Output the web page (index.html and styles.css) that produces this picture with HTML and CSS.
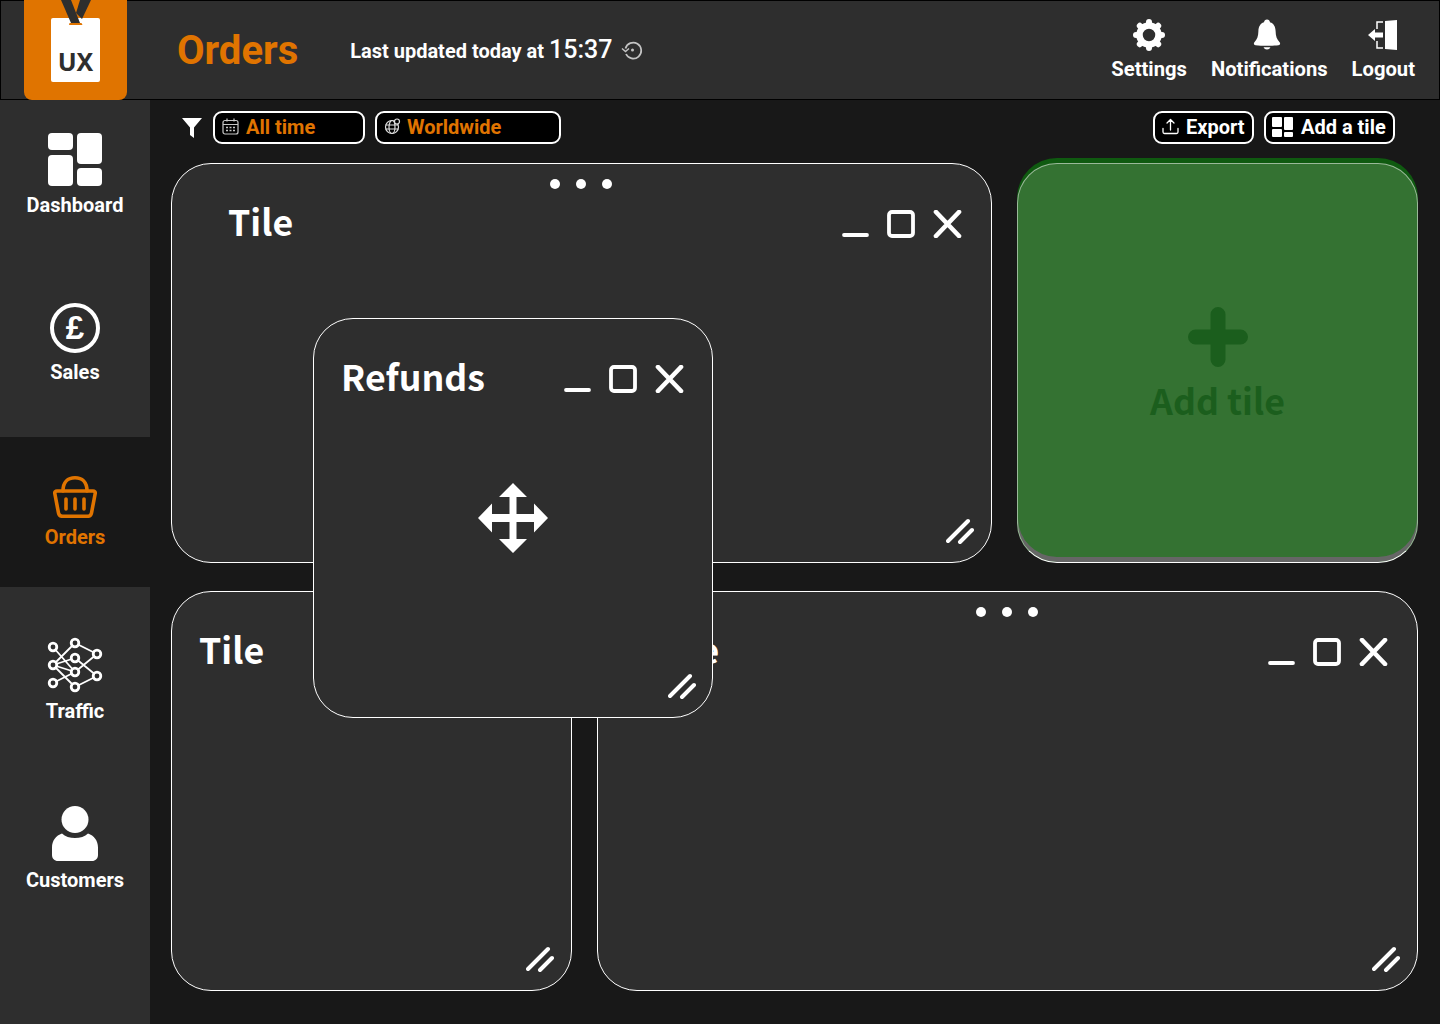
FILE: index.html
```html
<!DOCTYPE html>
<html lang="en">
<head>
  <meta charset="UTF-8" />
  <title>Orders</title>
  <link rel="stylesheet" href="styles.css">
</head>
<body>
  <header class="topbar">
    <div class="logo">
      <svg class="lanyard" width="103" height="30" viewBox="0 0 103 30">
        <path d="M37 0h10l9 23H47z" fill="#2e2e2e"/>
        <path d="M56 0h11l-9 19-6-6z" fill="#2e2e2e"/>
        <path d="M45.500 23h12l1 2h-13.500z" fill="#e07400"/>
      </svg>
      <div class="badge">UX</div>
    </div>
    <h1 class="page-title">Orders</h1>
    <p class="updated">Last updated today at <span class="updated-time">15:37</span></p>
    <svg class="history" width="22" height="22" viewBox="0 0 22 22" fill="none" stroke="#c4c4c4" stroke-width="1.700">
      <path d="M4.500 9.500A8 8 0 1 1 5 15"/>
      <path d="M1 9.500l3.500 3 3.500-3" stroke-width="1.500"/>
      <circle cx="11.500" cy="11" r="1.500" fill="#c4c4c4" stroke="none"/>
    </svg>
    <nav class="top-actions">
      <a class="top-action">
        <svg width="32" height="32" viewBox="0 0 32 32" fill="none" stroke="#fff">
          <circle cx="16" cy="16" r="9.500" stroke-width="6.500"/>
          <g stroke-width="6" stroke-linecap="round">
            <path d="M16 3v.5"/><path d="M16 28.500v.5"/><path d="M3 16h.5"/><path d="M28.500 16h.5"/>
            <path d="M6.800 6.800l.3.3"/><path d="M24.900 24.900l.3.3"/><path d="M25.200 6.800l-.3.3"/><path d="M7.100 24.900l-.3.3"/>
          </g>
        </svg>
        <span>Settings</span>
      </a>
      <a class="top-action">
        <svg width="32" height="32" viewBox="2 0 32 32" fill="#fff">
          <path d="M16 0.500c1.800 0 2.800 1.200 3 2.800 4 1.300 5.500 4.800 5.600 8.700.1 5 1.200 8.400 3.800 10.900 1.300 1.300.8 3.100-1 3.300-3 .4-7 .6-11.400.6s-8.400-.2-11.400-.6c-1.800-.2-2.300-2-1-3.300 2.600-2.500 3.700-5.900 3.800-10.900.1-3.900 1.600-7.400 5.600-8.700.2-1.600 1.200-2.800 3-2.800z"/>
          <path d="M12.500 28c1 .4 6 .4 7 0-.6 1.700-1.900 2.500-3.500 2.500s-2.900-.8-3.500-2.500z"/>
        </svg>
        <span>Notifications</span>
      </a>
      <a class="top-action">
        <svg width="32" height="32" viewBox="0 0 32 32">
          <path d="M18 1l12-1v30l-12-1z" fill="#fff" transform="translate(0 1)"/>
          <path d="M16 3h-6v7M16 29h-6v-7" fill="none" stroke="#fff" stroke-width="1.500"/>
          <path d="M1 16l7-6v3.500h8v5h-8V22z" fill="#fff"/>
        </svg>
        <span>Logout</span>
      </a>
    </nav>
  </header>

  <div class="content">
    <aside class="sidebar">
      <a class="side-item side-dashboard">
        <svg width="54" height="53" viewBox="0 0 54 53" fill="#fff">
          <rect width="25" height="17" rx="4"/>
          <rect x="29" width="25" height="31" rx="4"/>
          <rect y="22" width="25" height="31" rx="4"/>
          <rect x="29" y="35" width="25" height="18" rx="4"/>
        </svg>
        <span>Dashboard</span>
      </a>
      <a class="side-item side-sales">
        <div class="pound">£</div>
        <span>Sales</span>
      </a>
      <a class="side-item side-orders active">
        <svg width="44" height="42" viewBox="0 0 44 42" fill="none" stroke="#e07400" stroke-width="3.600" stroke-linecap="round" stroke-linejoin="round">
          <path d="M10 15C10 6 15 1.800 22 1.800S34 6 34 15"/>
          <path d="M4 15h36c1.500 0 2.500 1 2.200 2.500L38.500 37c-.4 2.200-1.700 3.300-4 3.300h-25c-2.300 0-3.600-1.100-4-3.300L1.800 17.500C1.500 16 2.500 15 4 15z"/>
          <path d="M13 23v10M22 23v10M31 23v10"/>
        </svg>
        <span>Orders</span>
      </a>
      <a class="side-item side-traffic">
        <svg width="56" height="56" viewBox="0 0 56 56" fill="#2e2e2e" stroke="#fff">
          <g stroke-width="1.800" fill="none">
            <path d="M6 10L28 35M6 28L28 6M6 28L28 21M6 28L28 35M6 28L28 50M6 46L28 35"/>
            <path d="M28 6L50 17M28 21L50 39M28 35L50 17M28 50L50 39"/>
          </g>
          <g stroke-width="2.800">
            <circle cx="6" cy="10" r="3.800"/><circle cx="6" cy="28" r="3.800"/><circle cx="6" cy="46" r="3.800"/>
            <circle cx="28" cy="6" r="3.800"/><circle cx="28" cy="21" r="3.800"/><circle cx="28" cy="35" r="3.800"/><circle cx="28" cy="50" r="3.800"/>
            <circle cx="50" cy="17" r="3.800"/><circle cx="50" cy="39" r="3.800"/>
          </g>
        </svg>
        <span>Traffic</span>
      </a>
      <a class="side-item side-customers">
        <svg width="46" height="55" viewBox="0 0 46 55" fill="#fff">
          <circle cx="23" cy="13.500" r="13.500"/>
          <path d="M10 27.500c3 3 8 4.500 13 4.500s10-1.500 13-4.500c6 2 10 7 10 14V49c0 3.500-2.500 6-6 6H6c-3.500 0-6-2.500-6-6v-7.500c0-7 4-12 10-14z"/>
        </svg>
        <span>Customers</span>
      </a>
    </aside>

    <main class="main">
      <div class="toolbar">
        <svg class="funnel" width="20" height="20" viewBox="0 0 20 20" fill="#fff">
          <path d="M0 0h20l-8 9.500V20l-4-3V9.500z"/>
        </svg>
        <button class="pill pill-time">
          <svg width="17" height="17" viewBox="0 0 17 17" fill="none" stroke="#c8c8c8" stroke-width="1.200">
            <rect x="1" y="2.500" width="15" height="13.500" rx="2"/>
            <path d="M1 6.500h15M5 .5v3M12 .5v3"/>
            <path d="M4 9.500h2M7.500 9.500h2M11 9.500h2M4 12.500h2M7.500 12.500h2M11 12.500h2" stroke-width="1.600"/>
          </svg>
          <span class="pill-orange">All time</span>
        </button>
        <button class="pill pill-place">
          <svg width="17" height="17" viewBox="0 0 17 17" fill="none" stroke="#e0e0e0" stroke-width="1.200">
            <circle cx="8" cy="9" r="6.500"/>
            <ellipse cx="8" cy="9" rx="3" ry="6.500"/>
            <path d="M1.500 7h13M1.500 11h13"/>
            <circle cx="13" cy="3.500" r="2.500" fill="#000"/>
          </svg>
          <span class="pill-orange">Worldwide</span>
        </button>
        <div class="toolbar-right">
          <button class="pill pill-export">
            <svg width="17" height="17" viewBox="0 0 17 17" fill="none" stroke="#fff" stroke-width="1.300" stroke-linecap="round" stroke-linejoin="round">
              <path d="M8.500 12V2M5 5l3.500-3.500L12 5"/>
              <path d="M1 10.500V14c0 1 .5 1.500 1.500 1.500h12c1 0 1.500-.5 1.500-1.500v-3.500"/>
            </svg>
            <span>Export</span>
          </button>
          <button class="pill pill-add">
            <svg width="21" height="20" viewBox="0 0 21 20" fill="#fff">
              <rect width="10" height="10" rx="1"/>
              <rect x="12" width="9" height="13" rx="1"/>
              <rect y="12" width="10" height="8" rx="1"/>
              <rect x="12" y="15" width="9" height="5" rx="1"/>
            </svg>
            <span>Add a tile</span>
          </button>
        </div>
      </div>

      <div class="tiles">
        <div class="tile-row">
          <section class="tile tile-wide">
            <div class="dots"><i></i><i></i><i></i></div>
            <h2 class="tile-title title-moved">Tile</h2>
            <svg class="win-controls" width="120" height="28" viewBox="0 0 120 28" fill="none" stroke="#fff" stroke-width="3.800" stroke-linecap="round" stroke-linejoin="round">
              <path d="M2 25h23"/>
              <rect x="47" y="2" width="24" height="24" rx="3"/>
              <path d="M94 2l23 24M117 2L94 26" stroke-width="4.600"/>
            </svg>
            <svg class="resize" width="28" height="28" viewBox="0 0 28 28" stroke="#fff" stroke-width="4" stroke-linecap="round">
              <path d="M2 24L22 4M14 25L26 13"/>
            </svg>
          </section>
          <section class="tile tile-add">
            <svg width="60" height="60" viewBox="0 0 60 60" stroke="#1b5e1d" stroke-width="15" stroke-linecap="round">
              <path d="M30 7.500v45M7.500 30h45"/>
            </svg>
            <div class="add-label">Add tile</div>
          </section>
        </div>
        <div class="tile-row">
          <section class="tile">
            <h2 class="tile-title">Tile</h2>
            <svg class="resize" width="28" height="28" viewBox="0 0 28 28" stroke="#fff" stroke-width="4" stroke-linecap="round">
              <path d="M2 24L22 4M14 25L26 13"/>
            </svg>
          </section>
          <section class="tile tile-wide">
            <div class="dots"><i></i><i></i><i></i></div>
            <h2 class="tile-title title-moved">Tile</h2>
            <svg class="win-controls" width="120" height="28" viewBox="0 0 120 28" fill="none" stroke="#fff" stroke-width="3.800" stroke-linecap="round" stroke-linejoin="round">
              <path d="M2 25h23"/>
              <rect x="47" y="2" width="24" height="24" rx="3"/>
              <path d="M94 2l23 24M117 2L94 26" stroke-width="4.600"/>
            </svg>
            <svg class="resize" width="28" height="28" viewBox="0 0 28 28" stroke="#fff" stroke-width="4" stroke-linecap="round">
              <path d="M2 24L22 4M14 25L26 13"/>
            </svg>
          </section>
        </div>
      </div>

      <section class="tile tile-floating">
        <h2 class="tile-title">Refunds</h2>
        <svg class="win-controls" width="120" height="28" viewBox="0 0 120 28" fill="none" stroke="#fff" stroke-width="3.800" stroke-linecap="round" stroke-linejoin="round">
          <path d="M2 25h23"/>
          <rect x="47" y="2" width="24" height="24" rx="3"/>
          <path d="M94 2l23 24M117 2L94 26" stroke-width="4.600"/>
        </svg>
        <svg class="move" width="70" height="70" viewBox="0 0 70 70" fill="#fff">
          <path d="M35 0l14 14h-10.500v17H56V20.500L70 35 56 49.500V39H38.500v17H49L35 70 21 56h10.500V39H14v10.500L0 35l14-14.500V31h17.500V14H21z"/>
        </svg>
        <svg class="resize" width="28" height="28" viewBox="0 0 28 28" stroke="#fff" stroke-width="4" stroke-linecap="round">
          <path d="M2 24L22 4M14 25L26 13"/>
        </svg>
      </section>
    </main>
  </div>
</body>
</html>
```

FILE: styles.css
```css
* {
  box-sizing: border-box;
}
html, body {
  margin: 0;
  height: 1024px;
  overflow: hidden;
}
body {
  font-family: Roboto, Arial, sans-serif;
  font-weight: 700;
  background: #181818;
  color: #fff;
}

/* top bar */
.topbar {
  display: flex;
  align-items: center;
  height: 100px;
  background: #2e2e2e;
  border: 1px solid #000;
  padding-left: 23px;
  padding-right: 24px;
  position: relative;
  z-index: 2;
}
.logo {
  position: relative;
  flex: none;
  width: 103px;
  height: 100px;
  margin-top: -1px;
  margin-bottom: -1px;
  align-self: flex-start;
  background: #e07400;
  border-radius: 0 0 8px 8px;
  display: flex;
  justify-content: center;
  padding-top: 18px;
}
.lanyard {
  position: absolute;
  left: 0;
  top: 0;
}
.badge {
  width: 49px;
  height: 64px;
  background: #fff;
  border-radius: 2px;
  color: #2e2e2e;
  font-family: "Noto Sans", sans-serif;
  font-size: 25px;
  line-height: 28px;
  text-align: center;
  padding-top: 29px;
}
.page-title {
  margin: 0 0 0 50px;
  color: #e07400;
  font-size: 40px;
  font-weight: 700;
}
.updated {
  margin: 0 0 2px 52px;
  font-size: 20px;
  font-weight: 700;
  white-space: nowrap;
}
.updated-time {
  font-size: 25px;
  font-weight: 500;
}
.history {
  margin-left: 9px;
  margin-bottom: 1px;
}
.top-actions {
  margin-left: auto;
  display: flex;
  gap: 24px;
}
.top-action {
  display: flex;
  flex-direction: column;
  align-items: center;
  font-size: 20.2px;
  line-height: 24px;
  gap: 6px;
  margin-top: -1px;
}

/* sidebar */
.content {
  display: flex;
  height: 924px;
}
.sidebar {
  flex: none;
  width: 150px;
  background: #2e2e2e;
  display: flex;
  flex-direction: column;
}
.side-item {
  display: flex;
  flex-direction: column;
  align-items: center;
  font-size: 20px;
  line-height: 24px;
  gap: 7px;
}
.side-dashboard {
  height: 170px;
  padding-top: 33px;
}
.side-sales {
  height: 167px;
  padding-top: 33px;
}
.side-orders {
  height: 150px;
  padding-top: 39px;
}
.side-traffic {
  height: 187px;
  padding-top: 50px;
  gap: 6px;
}
.side-customers {
  padding-top: 32px;
}
.side-item.active {
  background: #181818;
  color: #e07400;
}
.pound {
  width: 50px;
  height: 50px;
  border: 4px solid #fff;
  border-radius: 50%;
  font-family: "Liberation Sans", sans-serif;
  font-size: 33px;
  line-height: 41px;
  text-align: center;
}

/* main area */
.main {
  flex: 1;
  position: relative;
  padding: 11px 22px 0 21px;
}
.toolbar {
  display: flex;
  align-items: center;
  gap: 10px;
  height: 33px;
  padding-left: 11px;
  padding-right: 23px;
}
.funnel {
  margin-right: 1px;
}
.toolbar-right {
  margin-left: auto;
  display: flex;
  gap: 10px;
}
.pill {
  display: flex;
  align-items: center;
  gap: 7px;
  height: 33px;
  background: #000;
  border: 2px solid #fff;
  border-radius: 9px;
  color: #fff;
  font-family: Roboto, Arial, sans-serif;
  font-weight: 700;
  font-size: 20px;
  padding: 0 0 2px 7px;
}
.pill-orange {
  color: #e07400;
}
.pill-time {
  width: 152px;
}
.pill-place {
  width: 186px;
  gap: 6px;
}
.pill-export {
  width: 101px;
}
.pill-add {
  width: 131px;
  padding-left: 6px;
  gap: 8px;
}

/* tiles */
.tiles {
  margin-top: 19px;
  display: flex;
  flex-direction: column;
  gap: 28px;
}
.tile-row {
  display: flex;
  gap: 25px;
}
.tile {
  position: relative;
  flex: none;
  width: 401px;
  height: 400px;
  background: #2e2e2e;
  border: 1px solid #fff;
  border-radius: 40px;
}
.tile-wide {
  width: 821px;
}
.tile-title {
  margin: 0;
  padding: 34px 0 0 27px;
  font-family: "Noto Sans CJK SC", "Noto Sans", sans-serif;
  font-size: 35.7px;
  line-height: 46px;
  font-weight: 700;
}
.title-moved {
  padding-left: 56px;
}
.dots {
  position: absolute;
  top: 15px;
  left: 0;
  right: 1px;
  display: flex;
  justify-content: center;
  gap: 16px;
}
.dots i {
  width: 10px;
  height: 10px;
  border-radius: 50%;
  background: #fff;
}
.win-controls {
  position: absolute;
  right: 29px;
  top: 46px;
}
.resize {
  position: absolute;
  right: 17px;
  bottom: 17px;
}
.tile-add {
  background: #347232;
  border-color: rgba(255, 255, 255, 0.5) rgba(255, 255, 255, 0.5) #fff;
  box-shadow: 0 -5px 0 #0f5a10, inset 0 -5px 0 #666;
  display: flex;
  flex-direction: column;
  align-items: center;
  padding-top: 143px;
}
.add-label {
  margin-top: 10px;
  color: #1b5e1d;
  font-family: "Noto Sans CJK SC", "Noto Sans", sans-serif;
  font-size: 35.7px;
  line-height: 46px;
}
.tile-floating {
  position: absolute;
  left: 163px;
  top: 218px;
  width: 400px;
  z-index: 1;
}
.tile-floating .win-controls {
  right: 28px;
}
.tile-floating .resize {
  right: 16px;
}
.move {
  position: absolute;
  left: 164px;
  top: 164px;
}
```
